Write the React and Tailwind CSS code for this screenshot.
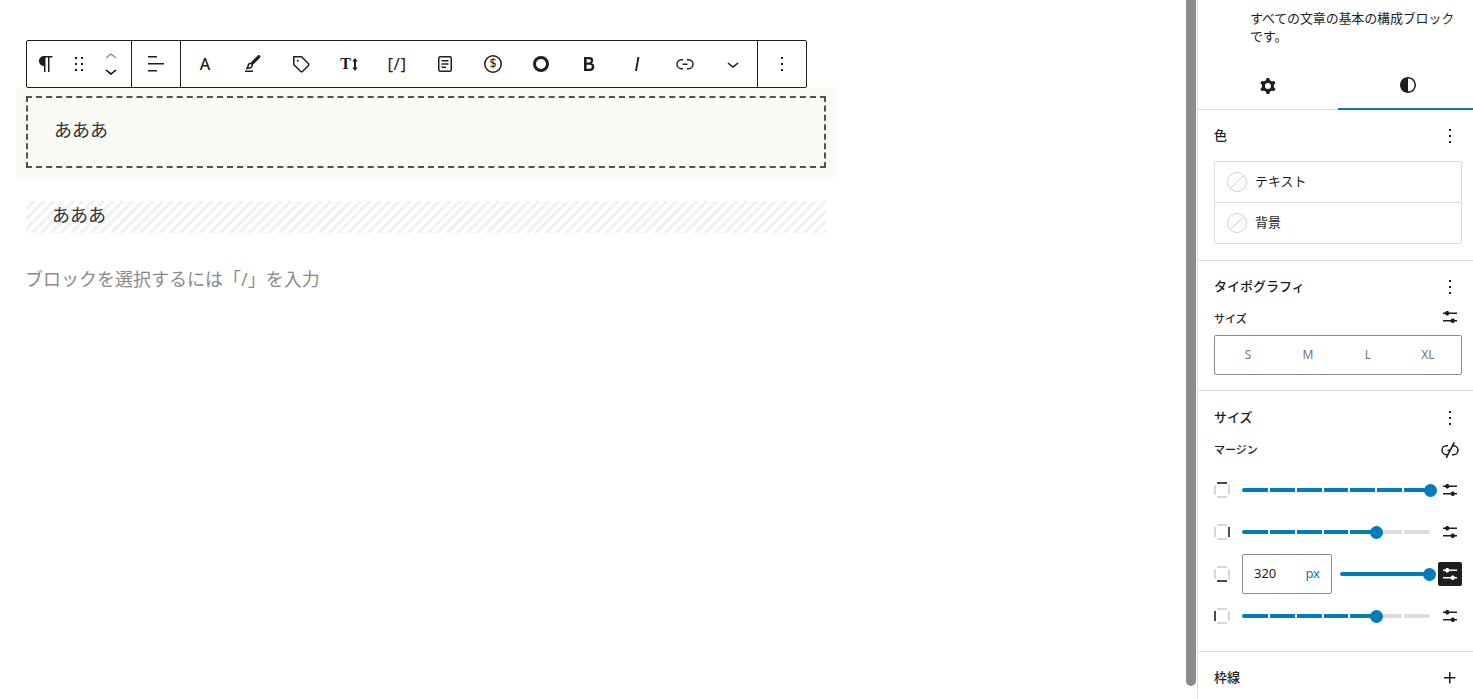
import React from 'react';

const P = {
  pilcrow: 'm9.99609 14v-.2251l.00391.0001v6.225h1.5v-14.5h2.5v14.5h1.5v-14.5h3v-1.5h-8.50391c-2.76142 0-5 2.23858-5 5 0 2.7614 2.23858 5 5 5z',
  drag: 'M8 7h2V5H8v2zm0 6h2v-2H8v2zm0 6h2v-2H8v2zm6-14v2h2V5h-2zm0 8h2v-2h-2v2zm0 6h2v-2h-2v2z',
  up: 'M6.5 12.4L12 8l5.5 4.4-.9 1.2L12 10l-4.5 3.6-1-1.2z',
  down: 'M17.5 11.6L12 16l-5.5-4.4.9-1.2L12 14l4.5-3.6 1 1.2z',
  alignLeft: 'M13 5.5H4V4h9v1.5Zm7 7H4V11h16v1.5Zm-7 7H4V18h9v1.5Z',
  brush: 'M4 20h8v-1.5H4V20zM18.9 3.5c-.6-.6-1.5-.6-2.1 0l-7.2 7.2c-.4-.1-.7 0-1.1.1-.5.2-1.5.7-1.9 2.2-.4 1.7-.8 2.2-1.1 2.7-.1.1-.2.3-.3.4l-.6 1.1H6c2 0 3.4-.4 4.7-1.4.8-.6 1.2-1.4 1.3-2.3 0-.3 0-.5-.1-.7L19 5.7c.5-.6.5-1.6-.1-2.2zM9.7 14.7c-.7.5-1.5.8-2.4 1 .2-.5.5-1.2.8-2.3.2-.6.4-1 .8-1.1.5-.1 1 .1 1.3.3.2.2.3.5.2.8 0 .3-.1.9-.7 1.3z',
  tag: 'M4.75 4a.75.75 0 0 0-.75.75v7.826c0 .2.08.39.22.53l6.72 6.716a2.313 2.313 0 0 0 3.276-.001l5.61-5.611-.531-.53.532.528a2.315 2.315 0 0 0 0-3.264L13.104 4.22a.75.75 0 0 0-.53-.22H4.75ZM19 12.576a.815.815 0 0 1-.236.574l-5.61 5.611a.814.814 0 0 1-1.153 0L5.5 12.264V5.5h6.763l6.5 6.502a.816.816 0 0 1 .237.574ZM8.75 9.75a1 1 0 1 0 0-2 1 1 0 0 0 0 2Z',
  link: 'M10 17.389H8.444A5.194 5.194 0 1 1 8.444 7H10v1.5H8.444a3.694 3.694 0 0 0 0 7.389H10v1.5ZM14 7h1.556a5.194 5.194 0 0 1 0 10.39H14v-1.5h1.556a3.694 3.694 0 0 0 0-7.39H14V7Zm-4.5 6h5v-1.5h-5V13Z',
  more: 'M13 19h-2v-2h2v2zm0-6h-2v-2h2v2zm0-6h-2V5h2v2z',
  bold: 'M14.7 11.3c1-.6 1.5-1.6 1.5-3 0-2.3-1.3-3.4-4-3.4H7v14h5.8c1.4 0 2.5-.3 3.3-1 .8-.7 1.2-1.7 1.2-2.9.1-1.9-.8-3.1-2.6-3.7zm-5.1-4h2.3c.6 0 1.1.1 1.4.4.3.3.5.7.5 1.2s-.2 1-.5 1.2c-.3.3-.8.4-1.4.4H9.6V7.3zm4.6 9c-.4.3-1 .4-1.7.4H9.6v-3.9h2.9c.7 0 1.3.2 1.7.5.4.3.6.8.6 1.5s-.2 1.2-.6 1.5z',
  italic: 'M12.5 5L10 19h1.9l2.5-14z',
  sliders: 'm19 7.5h-7.628c-.3089-.87389-1.1423-1.5-2.122-1.5-.97966 0-1.81309.62611-2.12197 1.5h-2.12803v1.5h2.12803c.30888.87389 1.14231 1.5 2.12197 1.5.9797 0 1.8131-.62611 2.122-1.5h7.628zM19 15h-2.128c-.3089-.8739-1.1423-1.5-2.122-1.5s-1.8131.6261-2.122 1.5h-7.628v1.5h7.628c.3089.8739 1.1423 1.5 2.122 1.5s1.8131-.6261 2.122-1.5h2.128z',
  cog: 'M10.289 4.836A1 1 0 0111.275 4h1.306a1 1 0 01.987.836l.244 1.466c.787.26 1.503.679 2.108 1.218l1.393-.522a1 1 0 011.216.437l.653 1.13a1 1 0 01-.23 1.273l-1.148.944a6.025 6.025 0 010 2.435l1.149.946a1 1 0 01.23 1.272l-.653 1.13a1 1 0 01-1.216.437l-1.394-.522c-.605.54-1.32.958-2.108 1.218l-.244 1.466a1 1 0 01-.987.836h-1.306a1 1 0 01-.986-.836l-.244-1.466a5.995 5.995 0 01-2.108-1.218l-1.394.522a1 1 0 01-1.217-.436l-.653-1.131a1 1 0 01.23-1.272l1.149-.946a6.026 6.026 0 010-2.435l-1.148-.944a1 1 0 01-.23-1.272l.653-1.131a1 1 0 011.217-.437l1.393.522a5.994 5.994 0 012.108-1.218l.244-1.466zM14.929 12a3 3 0 11-6 0 3 3 0 016 0z',
  half: 'M12 4c-4.4 0-8 3.6-8 8s3.6 8 8 8 8-3.6 8-8-3.6-8-8-8zm0 14.5v-13c3.6 0 6.5 2.9 6.5 6.5s-2.9 6.5-6.5 6.5z',
  unlink: 'M17.031 4.703 15.576 4l-1.56 3H14v.03l-2.324 4.47H9.5V13h1.396l-1.502 2.889h-.95a3.694 3.694 0 0 1 0-7.389H10V7H8.444a5.194 5.194 0 1 0 0 10.389h.17L7.5 19.53l1.416.719L15.049 8.5h.507a3.694 3.694 0 0 1 0 7.39H14v1.5h1.556a5.194 5.194 0 0 0 .273-10.383l1.202-2.304Z',
  plus: 'M11 12.5V17.5H12.5V12.5H17.5V11H12.5V6H11V11H6V12.5H11Z',
};

const Icon = ({ d, size = 24, className = '' }) => (
  <svg width={size} height={size} viewBox="0 0 24 24" fill="currentColor" fillRule="evenodd" className={`shrink-0 ${className}`}>
    <path d={d} />
  </svg>
);

// toolbar cell, fixed width so the icons land where the block toolbar has them
const Tool = ({ w = 'w-[48px]', children }) => (
  <div className={`${w} h-full flex items-center justify-center text-[#1e1e1e]`}>{children}</div>
);

const DocIcon = () => (
  <svg width="24" height="24" viewBox="0 0 24 24" fill="none" stroke="currentColor" strokeWidth="1.5">
    <rect x="5.75" y="4.75" width="12.5" height="14.5" rx="1.5" />
    <path d="M8.5 8.75h7M8.5 12h7M8.5 15.25h4.5" />
  </svg>
);

const DollarIcon = () => (
  <svg width="24" height="24" viewBox="0 0 24 24" fill="none" stroke="currentColor" strokeWidth="1.5">
    <circle cx="12" cy="12" r="8.25" />
    <text x="12" y="16.3" textAnchor="middle" fontSize="12.5" fontWeight="400" fill="currentColor" stroke="none" fontFamily="'Noto Sans', sans-serif">$</text>
  </svg>
);

const UpDown = () => (
  <svg width="6" height="13" viewBox="0 0 6 13" fill="currentColor">
    <path d="M3 0 5.7 3.6H4V9.4H5.7L3 13 .3 9.4H2V3.6H.3Z" />
  </svg>
);

const Toolbar = () => (
  <div className="relative z-10 w-[781px] h-[48px] ml-[26px] bg-white border border-[#1e1e1e] rounded-[2px] flex items-center">
    <div className="w-[105px] h-full flex items-center border-r border-[#1e1e1e]">
      <Tool w="w-[38px]"><Icon d={P.pilcrow} /></Tool>
      <Tool w="w-[28px]"><Icon d={P.drag} /></Tool>
      <div className="w-[36px] flex flex-col items-center">
        <Icon d={P.up} className="text-[#949494] -mb-[10px]" />
        <Icon d={P.down} />
      </div>
    </div>
    <div className="w-[49px] h-full flex items-center justify-center border-r border-[#1e1e1e] text-[#1e1e1e]">
      <Icon d={P.alignLeft} />
    </div>
    <Tool><span className="font-medium text-[16px] leading-none -mt-[1px]">A</span></Tool>
    <Tool><Icon d={P.brush} /></Tool>
    <Tool><Icon d={P.tag} /></Tool>
    <Tool>
      <span className="flex items-center gap-[1px]">
        <span className="font-bold text-[16px] leading-none font-['Liberation_Serif',serif]">T</span>
        <UpDown />
      </span>
    </Tool>
    <Tool><span className="text-[17px] leading-none tracking-[0.5px] -mt-[2px]">[/]</span></Tool>
    <Tool><DocIcon /></Tool>
    <Tool><DollarIcon /></Tool>
    <Tool><span className="w-[16px] h-[16px] rounded-full border-[3px] border-[#1e1e1e]" /></Tool>
    <Tool><Icon d={P.bold} /></Tool>
    <Tool><Icon d={P.italic} /></Tool>
    <Tool><Icon d={P.link} /></Tool>
    <Tool><Icon d={P.down} /></Tool>
    <div className="w-[1px] h-full bg-[#1e1e1e]" />
    <div className="flex-1 flex items-center justify-center text-[#1e1e1e]"><Icon d={P.more} /></div>
  </div>
);

const Editor = () => (
  <main className="w-[1186px] h-full pt-[40px] shrink-0 bg-white">
    <Toolbar />
    <div className="-mt-[1px] ml-[16px] w-[820px] h-[91px] bg-[#fbfaf5] px-[10px] pt-[9px]">
      <div className="h-[72px] border-2 border-dashed border-[#4a5558] pl-[26px] flex items-center pb-[4px] text-[18px] text-[#333333]">
        あああ
      </div>
    </div>
    <div className="mt-[23px] ml-[26px] w-[800px] h-[32px] pl-[26px] pb-[4px] flex items-center text-[18px] text-[#333333] bg-[repeating-linear-gradient(-45deg,#f1f2f6_0px,#f1f2f6_3.5px,#ffffff_3.5px,#ffffff_7px)]">
      あああ
    </div>
    <div className="mt-[32px] ml-[25px] text-[18px] leading-[28px] text-[#8a8a8a]">ブロックを選択するには「/」を入力</div>
  </main>
);

const Head = ({ title, icon = P.more }) => (
  <div className="flex items-center justify-between">
    <h2 className="text-[13px] font-medium text-[#1e1e1e]">{title}</h2>
    <Icon d={icon} className="text-[#1e1e1e]" />
  </div>
);

const ColorRow = ({ label, first }) => (
  <div className={`flex items-center pl-[12px] gap-[8px] ${first ? 'h-[41px] border-b border-[#dcdcdc]' : 'h-[40px]'}`}>
    <svg width="20" height="20" viewBox="0 0 20 20" fill="none" stroke="#d0d0d0" strokeWidth="1">
      <circle cx="10" cy="10" r="9.5" />
      <path d="M4 16 16 4" />
    </svg>
    <span className="text-[13px] text-[#1e1e1e]">{label}</span>
  </div>
);

// square showing which margin side the slider sets
const SideIcon = ({ side }) => {
  const on = {
    top: 'M3 1h10',
    right: 'M15 3v10',
    bottom: 'M3 15h10',
    left: 'M1 3v10',
  }[side];
  return (
    <svg width="16" height="16" viewBox="0 0 16 16" fill="none" className="shrink-0">
      <path d="M3 1h10M15 3v10M3 15h10M1 3v10" stroke="#cccccc" strokeWidth="1.5" />
      <path d={on} stroke="#1e1e1e" strokeWidth="1.5" />
    </svg>
  );
};

const SEGMENTS = [26, 25, 25, 24, 25, 25, 26];

const MarkSlider = ({ filled }) => (
  <div className="relative w-[188px] h-[16px] flex items-center gap-[2px]">
    {SEGMENTS.map((w, i) => (
      <span
        key={i}
        style={{ width: w }}
        className={`h-[4px] ${i === 0 ? 'rounded-l-full' : ''} ${i === 6 ? 'rounded-r-full' : ''} ${i < filled ? 'bg-[#007cba]' : 'bg-[#dddddd]'}`}
      />
    ))}
    <span
      style={{ left: filled === 7 ? 182 : 128 }}
      className="absolute top-[2px] w-[13px] h-[13px] rounded-full bg-[#007cba]"
    />
  </div>
);

const SliderRow = ({ side, filled }) => (
  <div className="h-[42px] flex items-center">
    <SideIcon side={side} />
    <div className="ml-[12px]"><MarkSlider filled={filled} /></div>
    <Icon d={P.sliders} className="ml-[8px] text-[#1e1e1e]" />
  </div>
);

const Sidebar = () => (
  <aside className="flex-1 min-w-0 ml-[1px] border-l border-[#e0e0e0] bg-white overflow-hidden">
    <div className="h-[110px] border-b border-[#dcdcdc] relative">
      <p className="pt-[9px] pl-[52px] text-[13px] leading-[18px] text-[#1e1e1e] whitespace-nowrap tracking-[-0.15px]">
        すべての文章の基本の構成ブロック<br />です。
      </p>
      <div className="absolute left-0 right-0 bottom-[-1px] h-[48px] flex">
        <div className="w-[140px] flex items-center justify-center text-[#1e1e1e]"><Icon d={P.cog} /></div>
        <div className="flex-1 flex items-center justify-center pl-[5px] text-[#1e1e1e] border-b-2 border-[#007cba]"><Icon d={P.half} /></div>
      </div>
    </div>

    <section className="h-[151px] border-b border-[#dcdcdc] pl-[16px] pr-[11px] pt-[14px]">
      <Head title="色" />
      <div className="mt-[13px] h-[83px] border border-[#dcdcdc] rounded-[2px]">
        <ColorRow label="テキスト" first />
        <ColorRow label="背景" />
      </div>
    </section>

    <section className="h-[130px] border-b border-[#dcdcdc] pl-[16px] pr-[11px] pt-[14px]">
      <Head title="タイポグラフィ" />
      <div className="mt-[10px] flex items-center justify-between">
        <span className="text-[11px] font-medium text-[#1e1e1e]">サイズ</span>
        <Icon d={P.sliders} className="-my-[2px] -translate-y-[2px] text-[#1e1e1e]" />
      </div>
      <div className="mt-[6px] h-[40px] border border-[#8c8c8c] rounded-[2px] flex px-[3px] text-[12px] text-[#6e7681]">
        {['S', 'M', 'L', 'XL'].map((s) => (
          <span key={s} className="flex-1 flex items-center justify-center">{s}</span>
        ))}
      </div>
    </section>

    <section className="h-[261px] border-b border-[#dcdcdc] pl-[16px] pr-[11px] pt-[15px]">
      <Head title="サイズ" />
      <div className="mt-[8px] flex items-center justify-between">
        <span className="text-[11px] font-medium text-[#1e1e1e]">マージン</span>
        <Icon d={P.unlink} className="text-[#1e1e1e]" />
      </div>
      <div className="mt-[7px]">
        <SliderRow side="top" filled={7} />
        <SliderRow side="right" filled={5} />
        <div className="h-[42px] flex items-center">
          <SideIcon side="bottom" />
          <div className="ml-[12px] w-[90px] h-[40px] border border-[#8c8c8c] rounded-[2px] flex items-center justify-between px-[11px] text-[13px]">
            <span className="text-[#1e1e1e]">320</span>
            <span className="text-[#007cba]">px</span>
          </div>
          <div className="ml-[8px] relative w-[90px] h-[16px] flex items-center">
            <span className="w-full h-[4px] rounded-full bg-[#007cba]" />
            <span className="absolute right-[-6px] top-[2px] w-[13px] h-[13px] rounded-full bg-[#007cba]" />
          </div>
          <div className="ml-[8px] w-[24px] h-[24px] rounded-[2px] bg-[#1e1e1e] flex items-center justify-center text-white">
            <Icon d={P.sliders} />
          </div>
        </div>
        <SliderRow side="left" filled={5} />
      </div>
    </section>

    <section className="pl-[16px] pr-[11px] pt-[14px]">
      <Head title="枠線" icon={P.plus} />
    </section>
  </aside>
);

export default function App() {
  return (
    <div className="w-[1473px] h-[699px] flex overflow-hidden bg-white font-['Noto_Sans','Noto_Sans_CJK_JP',sans-serif]">
      <Editor />
      <div className="w-[10px] h-[686px] shrink-0 bg-[#8c8c8c] rounded-b-[5px]" />
      <Sidebar />
    </div>
  );
}
